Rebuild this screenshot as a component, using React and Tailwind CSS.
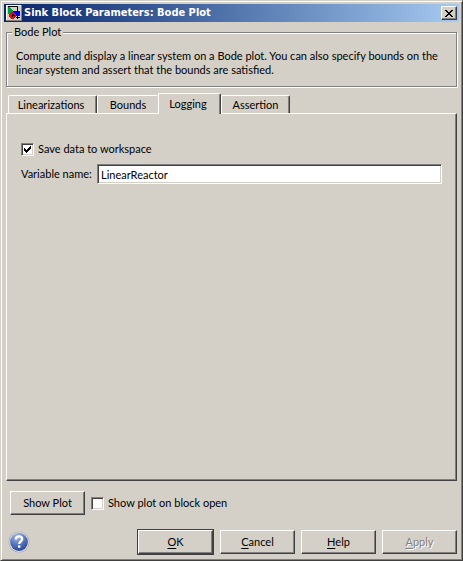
import React, { useState } from "react";

const raised =
  "border border-t-white border-l-white border-r-[#404040] border-b-[#404040] shadow-[inset_-1px_-1px_0_#808080]";

function BlockIcon() {
  return (
    <svg width="16" height="16" viewBox="0 0 16 16" shapeRendering="crispEdges" aria-hidden="true">
      <rect width="16" height="16" fill="#d4d0c8" />
      <path d="M0 0H15V1H1V15H0Z" fill="#fff" />
      <path d="M15 0H16V16H0V15H15Z" fill="#808080" />
      <path d="M2 1H3V2H4V3H5V4H6V5H7V9H2Z" fill="#00a040" />
      <path d="M7 6H14V11H7Z" fill="#0000ff" />
      <path d="M5 7H8V8H9V9H10V12H9V13H8V14H5V13H4V12H3V9H4V8H5Z" fill="#ff0000" />
      <path d="M2 1H12V12H14V13H12V14H11V13H10V12H11V2H2Z" fill="#000" />
      <path d="M6 9H8V10H9V11H7V12H6Z" fill="#000" />
    </svg>
  );
}

function HelpIcon() {
  return (
    <svg width="22" height="22" viewBox="0 0 22 22" aria-hidden="true">
      <defs>
        <radialGradient id="ball" cx="0.4" cy="0.2" r="0.85">
          <stop offset="0" stopColor="#a9bce6" />
          <stop offset="0.5" stopColor="#5d7ac0" />
          <stop offset="1" stopColor="#24418e" />
        </radialGradient>
      </defs>
      <circle cx="11" cy="11" r="10.5" fill="#aaa9aa" />
      <circle cx="11" cy="11" r="9.9" fill="#d9dbe4" />
      <circle cx="11" cy="11" r="8.9" fill="url(#ball)" />
      <path d="M7.9 8.4C7.9 6.4 9.1 5.3 11 5.3S14.2 6.4 14.2 8.1C14.2 10.3 11.2 10.3 11.2 13" fill="none" stroke="#fff" strokeWidth="2.3" />
      <rect x="10" y="14.4" width="2.4" height="2.3" fill="#fff" />
    </svg>
  );
}

function Tab({ label, active, onClick, className }) {
  return (
    <button
      type="button"
      role="tab"
      aria-selected={active}
      onClick={onClick}
      className={
        "rounded-t-[2px] border border-b-0 border-t-white border-l-white border-r-[#404040] bg-[#d4d0c8] text-center " +
        (active ? "relative -mb-px h-[21px] shadow-[inset_-1px_0_0_#808080] " : "h-[18px] ") +
        className
      }
    >
      {label}
    </button>
  );
}

function Check({ id, label, checked, onChange }) {
  return (
    <div className="flex items-center gap-1">
      <span className="grid h-[13px] w-[13px]">
        <input
          id={id}
          type="checkbox"
          checked={checked}
          onChange={onChange}
          className="col-start-1 row-start-1 h-[13px] w-[13px] appearance-none border border-t-[#808080] border-l-[#808080] border-r-white border-b-white bg-white shadow-[inset_1px_1px_0_#404040,inset_-1px_-1px_0_#d4d0c8]"
        />
        {checked && (
          <svg width="13" height="13" viewBox="0 0 13 13" shapeRendering="crispEdges" className="pointer-events-none col-start-1 row-start-1" aria-hidden="true">
            <path d="M3 5h1v1h1v1h1v-1h1v-1h1v-1h1v-1h1v3h-1v1h-1v1h-1v1h-1v1h-1v-1h-1v-1h-1z" fill="#000" />
          </svg>
        )}
      </span>
      <label htmlFor={id}>{label}</label>
    </div>
  );
}

function ActionButton({ letter, rest, className }) {
  return (
    <button type="button" className={"h-6 w-[75px] text-center " + raised + " " + (className || "")}>
      <span className="underline underline-offset-2">{letter}</span>
      {rest}
    </button>
  );
}

export default function App() {
  const [tab, setTab] = useState("Logging");
  const [save, setSave] = useState(true);
  const [show, setShow] = useState(false);
  const [name, setName] = useState("LinearReactor");
  return (
    <main className="flex min-h-screen flex-col border border-t-[#d4d0c8] border-l-[#d4d0c8] border-r-[#404040] border-b-[#404040] bg-[#d4d0c8] px-[3px] pt-[3px] pb-[5px] font-['Lato','Noto_Sans',sans-serif] text-[11px] leading-[14px] text-black shadow-[inset_1px_1px_0_#fff,inset_-1px_-1px_0_#808080]">
      <header className="flex h-[18px] items-center gap-0.5 bg-linear-to-r from-[#0a246a] to-[#a6caf0] px-0.5">
        <BlockIcon />
        <h1 className="flex-1 font-['DejaVu_Sans_Condensed','DejaVu_Sans',sans-serif] font-bold text-white">Sink Block Parameters: Bode Plot</h1>
        <button type="button" aria-label="Close" className={"flex h-[14px] w-4 items-center justify-center bg-[#d4d0c8] " + raised}>
          <svg width="8" height="7" viewBox="0 0 8 7" shapeRendering="crispEdges" aria-hidden="true">
            <path d="M0 0h2v1h1v1h2v-1h1v-1h2v1h-1v1h-1v1h-1v1h1v1h1v1h1v1h-2v-1h-1v-1h-2v1h-1v1h-2v-1h1v-1h1v-1h1v-1h-1v-1h-1v-1h-1z" fill="#000" />
          </svg>
        </button>
      </header>

      <fieldset className="mx-0.5 mt-[3px] h-[62px] border border-[#808080] px-[9px] shadow-[inset_1px_1px_0_#fff,1px_1px_0_#fff]">
        <legend className="-ml-1 bg-[#d4d0c8] px-0.5">Bode Plot</legend>
        <p className="pt-[10px]">
          Compute and display a linear system on a Bode plot. You can also specify bounds on the linear system and assert that the bounds are satisfied.
        </p>
      </fieldset>

      <div role="tablist" className="mx-0.5 mt-[6px] flex items-end pl-0.5">
        <Tab label="Linearizations" active={tab === "Linearizations"} onClick={() => setTab("Linearizations")} className="w-[89px] pr-[3px] shadow-[inset_-1px_0_0_#808080]" />
        <Tab label="Bounds" active={tab === "Bounds"} onClick={() => setTab("Bounds")} className="w-[61px] border-r-0" />
        <Tab label="Logging" active={tab === "Logging"} onClick={() => setTab("Logging")} className="w-[63px] pr-[3px]" />
        <Tab label="Assertion" active={tab === "Assertion"} onClick={() => setTab("Assertion")} className="w-[69px] shadow-[inset_-1px_0_0_#808080]" />
      </div>

      <section role="tabpanel" className={"mx-0.5 flex-1 px-[14px] pt-7 " + raised}>
        <Check id="save" label="Save data to workspace" checked={save} onChange={() => setSave(!save)} />
        <div className="mt-2 flex items-center gap-[6px]">
          <label htmlFor="variable" className="w-[70px] whitespace-nowrap">Variable name:</label>
          <input
            id="variable"
            value={name}
            onChange={(e) => setName(e.target.value)}
            className="h-5 min-w-0 flex-1 border border-t-[#808080] border-l-[#808080] border-r-white border-b-white bg-white px-[3px] shadow-[inset_1px_1px_0_#404040,inset_-1px_-1px_0_#d4d0c8] outline-none"
          />
        </div>
      </section>

      <div className="mt-[10px] flex items-center gap-[6px] px-[6px]">
        <button type="button" className={"h-6 w-[75px] " + raised}>Show Plot</button>
        <Check id="show" label="Show plot on block open" checked={show} onChange={() => setShow(!show)} />
      </div>

      <footer className="mt-[14px] flex items-center gap-[6px] pr-0.5 pl-1">
        <button type="button" aria-label="Help topics" className="mr-auto">
          <HelpIcon />
        </button>
        <div className="border border-[#404040]">
          <ActionButton letter="O" rest="K" />
        </div>
        <ActionButton letter="C" rest="ancel" />
        <ActionButton letter="H" rest="elp" />
        <ActionButton letter="A" rest="pply" className="text-[#808080] [text-shadow:1px_1px_0_#fff]" />
      </footer>
    </main>
  );
}
